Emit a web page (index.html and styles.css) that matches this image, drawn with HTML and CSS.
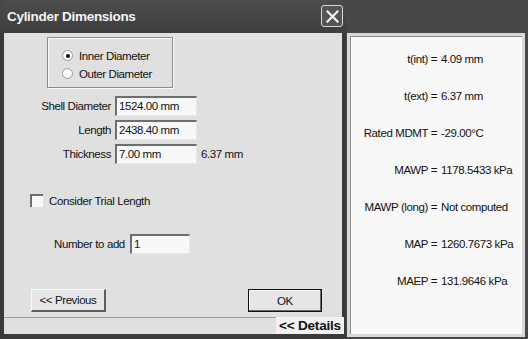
FILE: index.html
```html
<!DOCTYPE html>
<html lang="en">
<head>
    <meta charset="UTF-8">
    <title>Cylinder Dimensions</title>
    <link rel="stylesheet" href="styles.css">
</head>
<body>
    <div class="screen">
        <div class="dialog">
            <div class="titlebar">
                <span class="title">Cylinder Dimensions</span>
                <div class="close-btn">
                    <svg width="13" height="13" viewBox="0 0 13 13"><path d="M1.5 1.5 L11.5 11.5 M11.5 1.5 L1.5 11.5" stroke="#f2f2f2" stroke-width="2.2" stroke-linecap="square"/></svg>
                </div>
            </div>

            <div class="body">
                <div class="radio-box">
                    <label class="radio-row"><span class="radio checked"></span>Inner Diameter</label>
                    <label class="radio-row"><span class="radio"></span>Outer Diameter</label>
                </div>

                <div class="fields">
                    <span class="field-label">Shell Diameter</span>
                    <div class="textbox">1524.00 mm</div>
                    <span></span>

                    <span class="field-label">Length</span>
                    <div class="textbox">2438.40 mm</div>
                    <span></span>

                    <span class="field-label">Thickness</span>
                    <div class="textbox">7.00 mm</div>
                    <span class="field-extra">6.37 mm</span>
                </div>

                <label class="check-row"><span class="checkbox"></span>Consider Trial Length</label>

                <div class="add-row">
                    <span class="field-label">Number to add</span>
                    <div class="textbox small">1</div>
                </div>

                <div class="button-row">
                    <div class="button">&lt;&lt; Previous</div>
                    <div class="button ok">OK</div>
                </div>
            </div>

            <div class="status">
                <div class="status-fill"></div>
                <div class="details-btn">&lt;&lt; Details</div>
            </div>
        </div>

        <div class="results">
            <div class="results-inner">
                <span class="res-label">t(int) =</span><span>4.09 mm</span>
                <span class="res-label">t(ext) =</span><span>6.37 mm</span>
                <span class="res-label">Rated MDMT =</span><span>-29.00°C</span>
                <span class="res-label">MAWP =</span><span>1178.5433 kPa</span>
                <span class="res-label">MAWP (long) =</span><span>Not computed</span>
                <span class="res-label">MAP =</span><span>1260.7673 kPa</span>
                <span class="res-label">MAEP =</span><span>131.9646 kPa</span>
            </div>
        </div>
    </div>
</body>
</html>
```

FILE: styles.css
```css
body {
    margin: 0;
    background-color: #474747;
    font-family: "Liberation Sans", Arial, sans-serif;
    font-size: 11.5px;
    letter-spacing: -0.4px;
    color: #111;
    white-space: nowrap;
}
.screen {
    display: flex;
    width: 528px;
    height: 339px;
}

/* left dialog */
.dialog {
    width: 346px;
    height: 339px;
    display: flex;
    flex-direction: column;
    background-color: #3a3a3a;
    box-sizing: border-box;
    border-radius: 6px 6px 0 0;
}
.titlebar {
    height: 33px;
    display: flex;
    align-items: center;
    justify-content: space-between;
    padding: 0 3px 0 7px;
    background: linear-gradient(#4c4c4c, #3e3e3e);
    border-radius: 6px 6px 0 0;
}
.title {
    color: #f4f4f4;
    font-weight: bold;
    font-size: 13.5px;
    letter-spacing: -0.3px;
    margin-top: -1px;
}
.close-btn {
    width: 20px;
    height: 20px;
    border: 1px solid #d8d8d8;
    border-radius: 3px;
    background-color: #545454;
    display: flex;
    align-items: center;
    justify-content: center;
    margin-top: -1px;
}
.body {
    flex: 1;
    margin: 0 4px 0 4px;
    background-color: #e0e0e0;
    display: flex;
    flex-direction: column;
}
.radio-box {
    margin: 4px 0 0 43px;
    width: 126px;
    height: 51px;
    border: 1px solid #8c8c8c;
    box-shadow: 1px 1px 0 #fafafa, inset 1px 1px 0 #fafafa;
    display: flex;
    flex-direction: column;
    padding: 11px 0 0 14px;
    box-sizing: border-box;
    gap: 5px;
}
.radio-row, .check-row {
    display: flex;
    align-items: center;
    gap: 6px;
    height: 13px;
}
.radio {
    width: 11px;
    height: 11px;
    border-radius: 50%;
    background-color: #fafafa;
    border: 1px solid #9a9a9a;
    box-sizing: border-box;
    position: relative;
}
.radio.checked::after {
    content: "";
    position: absolute;
    left: 3px;
    top: 3px;
    width: 4px;
    height: 4px;
    border-radius: 50%;
    background-color: #111;
}
.fields {
    display: grid;
    grid-template-columns: 107px 82px auto;
    column-gap: 4px;
    row-gap: 4px;
    margin-top: 8px;
    align-items: center;
}
.field-label {
    text-align: right;
}
.textbox {
    height: 20px;
    box-sizing: border-box;
    background-color: #f8f8f8;
    border-top: 2px solid #6e6e6e;
    border-left: 2px solid #6e6e6e;
    border-right: 1px solid #e8e8e8;
    border-bottom: 1px solid #e8e8e8;
    padding-left: 2px;
    line-height: 17px;
}
.textbox.small {
    width: 60px;
}
.check-row {
    margin: 30px 0 0 26px;
}
.checkbox {
    width: 13px;
    height: 13px;
    box-sizing: border-box;
    background-color: #f8f8f8;
    border-top: 2px solid #6e6e6e;
    border-left: 2px solid #6e6e6e;
}
.add-row {
    display: flex;
    align-items: center;
    gap: 5px;
    margin: 27px 0 0 50px;
}
.button-row {
    display: flex;
    justify-content: space-between;
    margin: 35px 20px 0 27px;
}
.button {
    width: 75px;
    height: 23px;
    box-sizing: border-box;
    background-color: #e6e6e6;
    border-top: 1px solid #fafafa;
    border-left: 1px solid #fafafa;
    border-right: 2px solid #5e5e5e;
    border-bottom: 2px solid #5e5e5e;
    display: flex;
    align-items: center;
    justify-content: center;
}
.button.ok {
    width: 74px;
    border: 1px solid #111;
    box-shadow: inset -1px -1px 0 #6a6a6a, inset 1px 1px 0 #fafafa;
}
.status {
    height: 22px;
    display: flex;
    margin: 0 2px 0 4px;
}
.status-fill {
    flex: 1;
    background-color: #e0e0e0;
    border-top: 1px solid #9a9a9a;
    margin-bottom: 5px;
}
.details-btn {
    width: 68px;
    height: 17px;
    background-color: #f2f2f2;
    font-weight: bold;
    font-size: 13.5px;
    letter-spacing: -0.2px;
    display: flex;
    align-items: center;
    justify-content: center;
    color: #111;
}

/* right results panel */
.results {
    width: 178px;
    height: 304px;
    margin: 33px 0 0 1px;
    background-color: #d8d8d8;
    padding: 3px;
    box-sizing: border-box;
}
.results-inner {
    height: 100%;
    box-sizing: border-box;
    background-color: #f8f8f8;
    border-top: 1px solid #8a8a8a;
    border-left: 1px solid #8a8a8a;
    display: grid;
    grid-template-columns: 86px auto;
    grid-auto-rows: 37px;
    column-gap: 4px;
    align-content: start;
    align-items: center;
    padding-top: 3px;
}
.res-label {
    text-align: right;
}
```
